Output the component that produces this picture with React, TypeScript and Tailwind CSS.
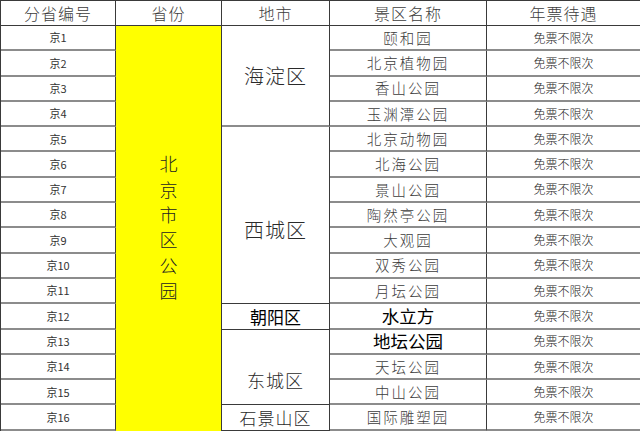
import React from 'react';

const sans = { fontFamily: '"Noto Sans CJK SC", "Noto Sans", sans-serif' };

const spots: { name: string; strong?: boolean }[] = [
  { name: '颐和园' },
  { name: '北京植物园' },
  { name: '香山公园' },
  { name: '玉渊潭公园' },
  { name: '北京动物园' },
  { name: '北海公园' },
  { name: '景山公园' },
  { name: '陶然亭公园' },
  { name: '大观园' },
  { name: '双秀公园' },
  { name: '月坛公园' },
  { name: '水立方', strong: true },
  { name: '地坛公园', strong: true },
  { name: '天坛公园' },
  { name: '中山公园' },
  { name: '国际雕塑园' },
];

const rowStarts = [
  'row-[2]', 'row-[3]', 'row-[4]', 'row-[5]', 'row-[6]', 'row-[7]', 'row-[8]', 'row-[9]',
  'row-[10]', 'row-[11]', 'row-[12]', 'row-[13]', 'row-[14]', 'row-[15]', 'row-[16]', 'row-[17]',
];

export default function App() {
  const head = 'flex items-center justify-center border-r border-b border-[#3a3a3a] text-[16px] font-light text-[#3c3c3c] tracking-[1px]';
  const line = 'border-r border-r-[#3a3a3a] border-b-2 border-b-[#8c8c8c]';

  return (
    <div className="w-[640px] h-[432px] bg-white overflow-hidden" style={sans}>
      <div className="grid grid-cols-[115px_106px_108px_157px_154px] grid-rows-[25px_repeat(16,25.3px)] border-t border-l border-[#3a3a3a]">
        <div className={`${head} col-[1] row-[1]`}>分省编号</div>
        <div className={`${head} col-[2] row-[1]`}>省份</div>
        <div className={`${head} col-[3] row-[1]`}>地市</div>
        <div className={`${head} col-[4] row-[1]`}>景区名称</div>
        <div className={`${head} col-[5] row-[1]`}>年票待遇</div>

        {spots.map((s, i) => (
          <React.Fragment key={i}>
            <div className={`${line} ${rowStarts[i]} col-[1] flex items-center justify-center text-[11px] text-[#333]`}>
              京{i + 1}
            </div>
            <div
              className={`${line} ${rowStarts[i]} col-[4] flex items-center justify-center ${
                s.strong ? 'text-[17.5px] font-normal text-black' : 'text-[14.5px] font-light text-[#3c3c3c] tracking-[2px]'
              }`}
            >
              {s.name}
            </div>
            <div className={`${line} ${rowStarts[i]} col-[5] flex items-center justify-center text-[12px] font-light text-[#222]`}>
              免票不限次
            </div>
          </React.Fragment>
        ))}

        <div className="col-[2] row-[2/18] bg-[#ffff00] border-r border-[#3a3a3a] flex flex-col items-center justify-center pb-[2px] text-[18px] leading-[25.3px] font-light text-[#222]">
          {'北京市区公园'.split('').map((c, i) => (
            <span key={i}>{c}</span>
          ))}
        </div>

        <div className="col-[3] row-[2/6] border-r border-r-[#3a3a3a] border-b-2 border-b-[#8c8c8c] flex items-center justify-center text-[20px] font-light text-[#2a2a2a] tracking-[1px]">
          海淀区
        </div>
        <div className="col-[3] row-[6/13] border-r border-r-[#3a3a3a] border-b border-b-[#3a3a3a] flex items-center justify-center pt-[30px] text-[20px] font-light text-[#2a2a2a] tracking-[1px]">
          西城区
        </div>
        <div className="col-[3] row-[13] border-r border-r-[#3a3a3a] border-b border-b-[#3a3a3a] flex items-center justify-center text-[17px] font-normal text-black">
          朝阳区
        </div>
        <div className="col-[3] row-[14/17] border-r border-r-[#3a3a3a] border-b border-b-[#3a3a3a] flex items-center justify-center pt-[26px] text-[18px] font-light text-[#2a2a2a] tracking-[1px]">
          东城区
        </div>
        <div className="col-[3] row-[17] border-r border-r-[#3a3a3a] border-b border-b-[#3a3a3a] flex items-center justify-center text-[17px] font-light text-[#2a2a2a] tracking-[1px]">
          石景山区
        </div>
      </div>
    </div>
  );
}
